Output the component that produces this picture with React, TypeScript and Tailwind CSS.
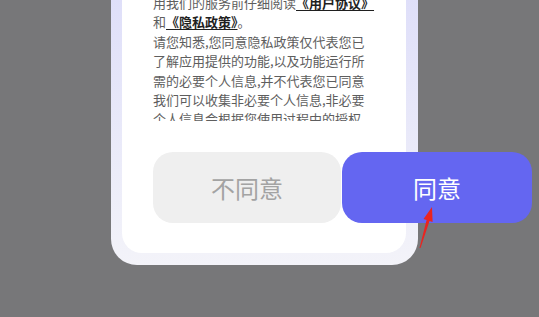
const lines: React.ReactNode[] = [
  <>
    用我们的服务前仔细阅读<span className="font-bold text-[#1f1f1f] underline underline-offset-2">《用户协议》</span>
  </>,
  <>
    和<span className="font-bold text-[#1f1f1f] underline underline-offset-2">《隐私政策》</span>。
  </>,
  '请您知悉,您同意隐私政策仅代表您已',
  '了解应用提供的功能,以及功能运行所',
  '需的必要个人信息,并不代表您已同意',
  '我们可以收集非必要个人信息,非必要',
  '个人信息会根据您使用过程中的授权',
  '情况单独征求您的同意。',
]

function Arrow() {
  return (
    <svg
      className="pointer-events-none absolute left-[414px] top-[203px]"
      width="24"
      height="50"
      viewBox="0 0 24 50"
    >
      <polygon
        points="18,4 18.6,18.9 15.5,17.9 6.5,45.1 5.5,44.9 12.6,17 9.5,16 "
        fill="#ea2420"
      />
    </svg>
  )
}

export default function App() {
  return (
    <div className="relative h-[317px] w-[539px] overflow-hidden bg-[#777779] font-['Noto_Sans_CJK_SC','Noto_Sans',sans-serif]">
      <div className="ml-[111px] mt-[-42px] w-[307px] rounded-[26px] bg-linear-to-b from-[#dcdcf9] to-[#f3f3f9] pb-[12px] pl-[11px] pr-[12px] pt-[11px]">
        <div className="rounded-[20px] bg-white pb-[30px] pl-[31px] pt-[24px]">
          <div className="h-[128px] overflow-hidden text-[13px] leading-[19.4px] text-[#5e5e5e]">
            {lines.map((l, i) => (
              <div key={i} className="whitespace-nowrap">
                {l}
              </div>
            ))}
          </div>
          <div className="mt-[31px] flex h-[71px] w-[379px] gap-px">
            <button className="flex w-[188px] items-center justify-center rounded-[20px] bg-[#efefef] text-[24px] text-[#a3a3a3]">
              不同意
            </button>
            <button className="flex w-[190px] items-center justify-center rounded-[20px] bg-[#6466f1] text-[24px] text-white">
              同意
            </button>
          </div>
        </div>
      </div>
      <Arrow />
    </div>
  )
}
